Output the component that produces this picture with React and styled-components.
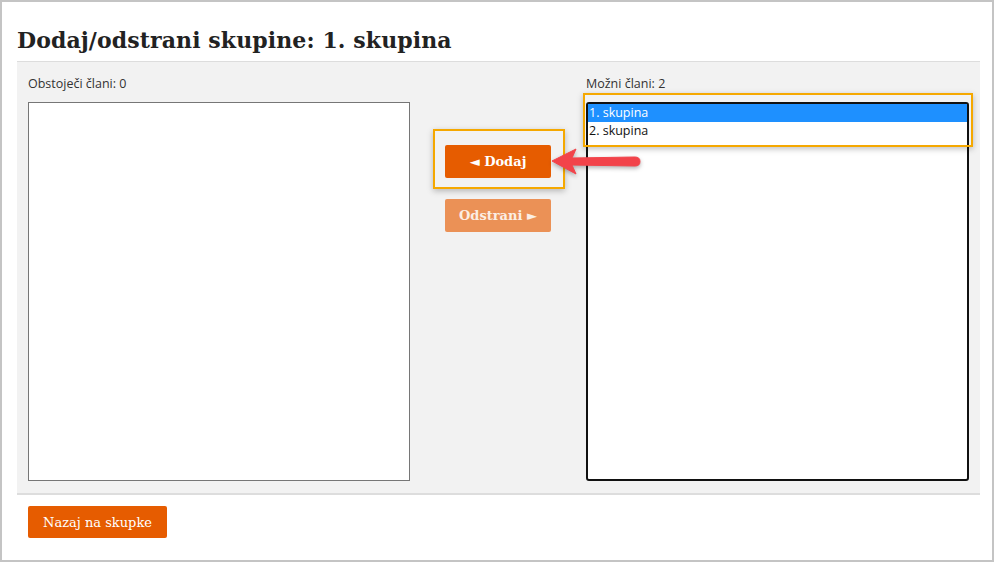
import styled, { createGlobalStyle } from 'styled-components';

const GlobalStyle = createGlobalStyle`
    html, body {
        margin: 0;
        padding: 0;
        background: #ffffff;
    }
`;

const App = () => {
    return (
        <>
            <GlobalStyle />
            <Frame>
                <Title>Dodaj/odstrani skupine: 1. skupina</Title>
                <Panel>
                    <Column>
                        <Label>Obstoječi člani: 0</Label>
                        <ListBox />
                    </Column>
                    <Middle>
                        <ButtonSlot>
                            <ActionButton>◄ Dodaj</ActionButton>
                            <Highlight $top={-16} $left={-12} $width={132} $height={60} />
                        </ButtonSlot>
                        <ActionButton $disabled>Odstrani ►</ActionButton>
                    </Middle>
                    <Column>
                        <Label>Možni člani: 2</Label>
                        <ListWrap>
                            <ListBox $focused>
                                <Option $selected>1. skupina</Option>
                                <Option>2. skupina</Option>
                            </ListBox>
                            <Highlight $top={-9} $left={-3} $width={390} $height={54} />
                            <Arrow width="92" height="32" viewBox="0 0 92 32">
                                <path
                                    d="M2 15 L26 3 L22 12 L85 11 Q90 11 90 15.5 Q90 20 85 20 L22 19 L26 28 Z"
                                    fill="#f2434a"
                                    strokeLinejoin="round"
                                    stroke="#f2434a"
                                    strokeWidth="1"
                                />
                            </Arrow>
                        </ListWrap>
                    </Column>
                </Panel>
                <Footer>
                    <ActionButton $wide>Nazaj na skupke</ActionButton>
                </Footer>
            </Frame>
        </>
    );
};

const Frame = styled.div`
    box-sizing: border-box;
    width: 994px;
    height: 562px;
    border: 2px solid #c4c4c4;
    padding: 0 12px 0 15px;
    background: #ffffff;
`;

const Title = styled.h1`
    margin: 0;
    height: 59px;
    box-sizing: border-box;
    padding-top: 22px;
    font-family: 'DejaVu Serif', 'Liberation Serif', serif;
    font-size: 22px;
    font-weight: bold;
    line-height: 32px;
    color: #222222;
    letter-spacing: 0.1px;
`;

const Panel = styled.div`
    display: grid;
    grid-template-columns: 382px 176px 383px;
    padding: 13px 11px 12px;
    background: #f2f2f2;
    border-top: 1px solid #dddddd;
    border-bottom: 2px solid #dddddd;
`;

const Column = styled.div`
    display: flex;
    flex-direction: column;
`;

const Label = styled.div`
    font-family: 'Open Sans', 'Noto Sans', sans-serif;
    font-size: 12.5px;
    line-height: 18px;
    color: #333333;
    margin-bottom: 9px;
`;

const ListWrap = styled.div`
    position: relative;
`;

const ListBox = styled.div`
    box-sizing: border-box;
    height: 379px;
    background: #ffffff;
    border: ${(p) => (p.$focused ? '2px solid #111111' : '1px solid #767676')};
    border-radius: ${(p) => (p.$focused ? '3px' : '0')};
    padding: ${(p) => (p.$focused ? '0' : '1px')};
`;

const Option = styled.div`
    height: 17.5px;
    padding-left: 1px;
    font-family: 'Open Sans', 'Noto Sans', sans-serif;
    font-size: 12.5px;
    line-height: 17.5px;
    color: ${(p) => (p.$selected ? '#ffffff' : '#111111')};
    background: ${(p) => (p.$selected ? '#1e90ff' : 'transparent')};
`;

const Middle = styled.div`
    display: flex;
    flex-direction: column;
    align-items: center;
    gap: 21px;
    padding-top: 70px;
`;

const ButtonSlot = styled.div`
    position: relative;
`;

const ActionButton = styled.button`
    box-sizing: border-box;
    width: ${(p) => (p.$wide ? '139px' : '106px')};
    height: ${(p) => (p.$wide ? '32px' : '33px')};
    border: none;
    border-radius: 2px;
    background: ${(p) => (p.$disabled ? '#eb9156' : '#e65c00')};
    color: ${(p) => (p.$disabled ? '#fbeee4' : '#ffffff')};
    font-family: 'DejaVu Serif', 'Liberation Serif', serif;
    font-size: 13px;
    font-weight: ${(p) => (p.$wide ? 'normal' : 'bold')};
    padding: 0;
    cursor: pointer;
`;

const Highlight = styled.div`
    position: absolute;
    top: ${(p) => p.$top}px;
    left: ${(p) => p.$left}px;
    width: ${(p) => p.$width}px;
    height: ${(p) => p.$height}px;
    box-sizing: border-box;
    border: 2px solid #f5a800;
    box-shadow: 0 2px 6px rgba(0, 0, 0, 0.25);
    pointer-events: none;
`;

const Arrow = styled.svg`
    position: absolute;
    left: -36px;
    top: 44px;
    overflow: visible;
    filter: drop-shadow(0 2px 2px rgba(0, 0, 0, 0.3));
`;

const Footer = styled.div`
    padding: 11px 11px;
`;

export default App;
